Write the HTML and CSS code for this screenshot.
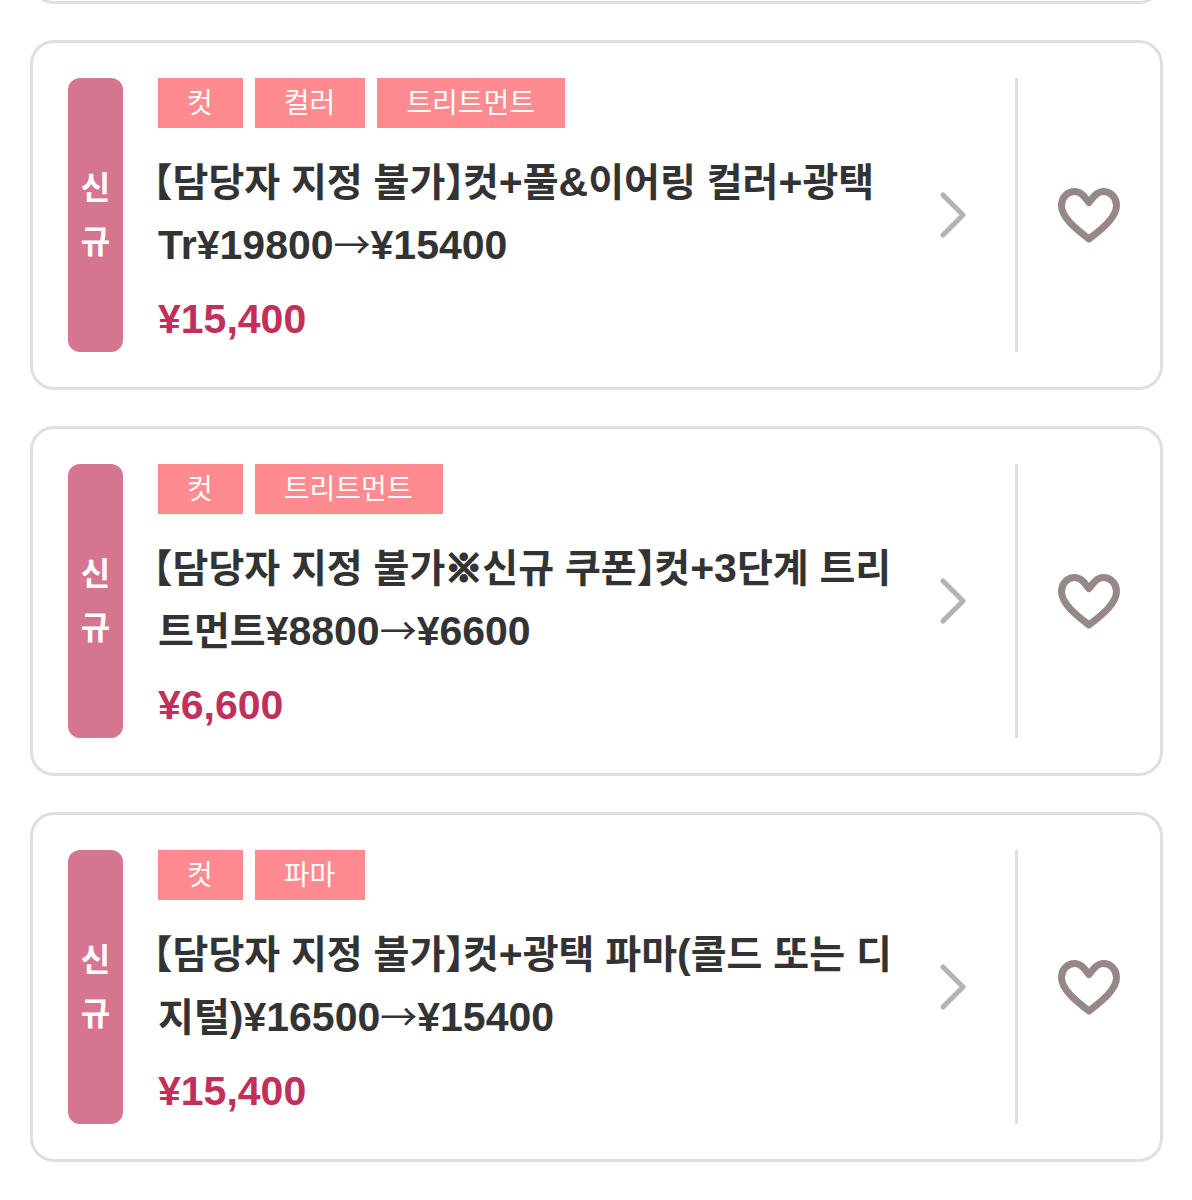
FILE: index.html
```html
<!DOCTYPE html>
<html lang="ko">
<head>
<meta charset="utf-8">
<meta name="viewport" content="width=device-width, initial-scale=1">
<title>쿠폰</title>
<link rel="stylesheet" href="styles.css">
</head>
<body>
<main class="coupons">
  <div class="card-end"></div>

  <article class="card">
    <div class="badge"><span>신</span><span>규</span></div>
    <a class="detail" href="#coupon-1">
      <div class="info">
        <ul class="tags"><li>컷</li><li>컬러</li><li>트리트먼트</li></ul>
        <h2 class="title"><span class="open">【</span>담당자 지정 불가<span class="close">】</span>컷<span class="latin">+</span>풀<span class="latin">&amp;</span>이어링 컬러<span class="latin">+</span>광택<br><span class="latin">Tr¥19800</span><span class="arrow">→</span><span class="latin">¥15400</span></h2>
        <p class="price">¥15,400</p>
      </div>
      <svg class="chevron" viewBox="0 0 28 46" aria-hidden="true"><path d="M4 3l20 20L4 43"/></svg>
    </a>
    <button class="favorite" type="button" aria-label="즐겨찾기">
      <svg class="heart" viewBox="0 0 64 60" aria-hidden="true"><path d="M32 54C22 46 4.500 33.500 4.500 20.500C4.500 12.500 10.500 6.500 17.500 6.500C23.500 6.500 26.500 10.500 32 17.500C37.500 10.500 40.500 6.500 46.500 6.500C53.500 6.500 59.500 12.500 59.500 20.500C59.500 33.500 42 46 32 54Z"/></svg>
    </button>
  </article>

  <article class="card">
    <div class="badge"><span>신</span><span>규</span></div>
    <a class="detail" href="#coupon-2">
      <div class="info">
        <ul class="tags"><li>컷</li><li>트리트먼트</li></ul>
        <h2 class="title"><span class="open">【</span>담당자 지정 불가<span class="mark">※</span>신규 쿠폰<span class="close">】</span>컷<span class="latin">+3</span>단계 트리<br>트먼트<span class="latin">¥8800</span><span class="arrow">→</span><span class="latin">¥6600</span></h2>
        <p class="price">¥6,600</p>
      </div>
      <svg class="chevron" viewBox="0 0 28 46" aria-hidden="true"><path d="M4 3l20 20L4 43"/></svg>
    </a>
    <button class="favorite" type="button" aria-label="즐겨찾기">
      <svg class="heart" viewBox="0 0 64 60" aria-hidden="true"><path d="M32 54C22 46 4.500 33.500 4.500 20.500C4.500 12.500 10.500 6.500 17.500 6.500C23.500 6.500 26.500 10.500 32 17.500C37.500 10.500 40.500 6.500 46.500 6.500C53.500 6.500 59.500 12.500 59.500 20.500C59.500 33.500 42 46 32 54Z"/></svg>
    </button>
  </article>

  <article class="card">
    <div class="badge"><span>신</span><span>규</span></div>
    <a class="detail" href="#coupon-3">
      <div class="info">
        <ul class="tags"><li>컷</li><li>파마</li></ul>
        <h2 class="title"><span class="open">【</span>담당자 지정 불가<span class="close">】</span>컷<span class="latin">+</span>광택 파마<span class="latin">(</span>콜드 또는 디<br>지털<span class="latin">)¥16500</span><span class="arrow">→</span><span class="latin">¥15400</span></h2>
        <p class="price">¥15,400</p>
      </div>
      <svg class="chevron" viewBox="0 0 28 46" aria-hidden="true"><path d="M4 3l20 20L4 43"/></svg>
    </a>
    <button class="favorite" type="button" aria-label="즐겨찾기">
      <svg class="heart" viewBox="0 0 64 60" aria-hidden="true"><path d="M32 54C22 46 4.500 33.500 4.500 20.500C4.500 12.500 10.500 6.500 17.500 6.500C23.500 6.500 26.500 10.500 32 17.500C37.500 10.500 40.500 6.500 46.500 6.500C53.500 6.500 59.500 12.500 59.500 20.500C59.500 33.500 42 46 32 54Z"/></svg>
    </button>
  </article>
</main>
</body>
</html>
```
FILE: styles.css
```css
* { box-sizing: border-box; }
body {
  margin: 0;
  background: #fff;
  color: #333;
  font-family: "Liberation Sans", "Noto Sans CJK KR", sans-serif;
}
h2, p, ul { margin: 0; padding: 0; }
.coupons { display: flex; flex-direction: column; gap: 36px; padding: 0 29px 36px 30px; }
.card-end { height: 4px; display: flex; align-items: flex-end; overflow: hidden; }
.card-end::after {
  content: "";
  flex: 1;
  height: 60px;
  border: 3px solid #dfdfe1;
  border-radius: 24px;
}
.card {
  display: flex;
  min-height: 350px;
  padding: 35px 0;
  border: 3px solid #dfdfe1;
  border-radius: 24px;
}
.badge {
  display: flex;
  flex-direction: column;
  justify-content: center;
  align-items: center;
  width: 55px;
  margin-left: 35px;
  border-radius: 12px;
  background: #d6758f;
  color: #fff;
  font-size: 32px;
  font-weight: 700;
  line-height: 54px;
}
.detail {
  display: flex;
  flex: 1;
  align-items: center;
  padding: 0 48px 0 35px;
  border-right: 3px solid #dfdfe1;
  color: inherit;
  text-decoration: none;
}
.info { flex: 1; align-self: flex-start; }
.tags { display: flex; gap: 12px; list-style: none; }
.tags li {
  padding: 2px 30px 0 29px;
  background: #ff8a8f;
  color: #fff;
  font-size: 28px;
  line-height: 48px;
}
.title { margin-top: 23px; font-size: 39px; line-height: 62px; }
.latin { font-size: 41px; }
.open, .close { font-feature-settings: "halt"; }
.open { margin-left: -5px; }
.close { margin-right: -2px; }
.arrow, .mark { font-family: "Noto Sans CJK KR", sans-serif; font-size: 37px; line-height: 1; }
.arrow { font-weight: 400; }
.mark { -webkit-text-stroke: 3px #333; }
.price { margin-top: 11px; color: #c0305a; font-size: 41px; font-weight: 700; line-height: 62px; }
.chevron {
  width: 28px;
  height: 46px;
  fill: none;
  stroke: #b3b3b3;
  stroke-width: 5;
  stroke-linecap: round;
  stroke-linejoin: round;
}
.favorite {
  display: flex;
  justify-content: center;
  align-items: center;
  width: 142px;
  padding: 0;
  border: 0;
  background: none;
}
.heart { width: 64px; height: 60px; fill: none; stroke: #978888; stroke-width: 7; stroke-linejoin: round; }
```
